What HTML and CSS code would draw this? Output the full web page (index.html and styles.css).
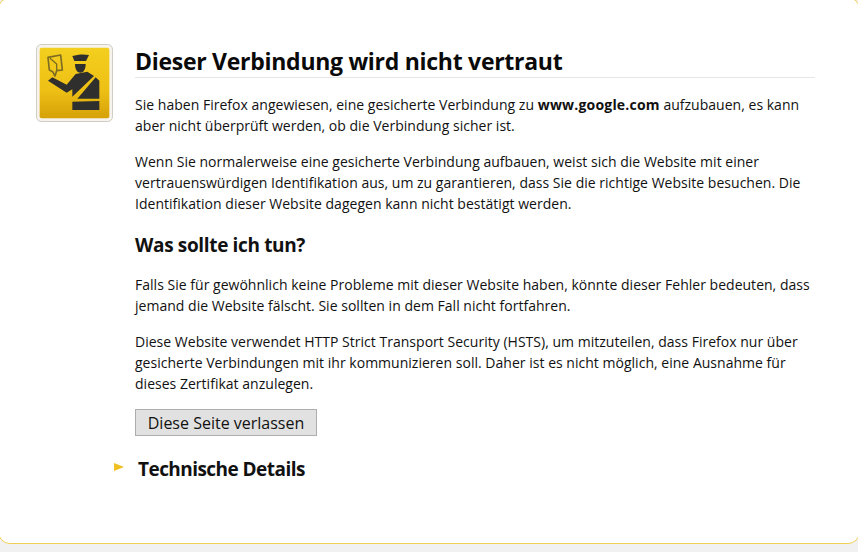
FILE: index.html
```html
<!DOCTYPE html>
<html lang="de">
<head>
<meta charset="utf-8">
<title>Dieser Verbindung wird nicht vertraut</title>
<link rel="stylesheet" href="styles.css">
</head>
<body>
<main class="card">
  <div class="icon-col">
    <svg class="icon" width="77" height="78" viewBox="0 0 231 234" aria-hidden="true">
      <defs>
        <linearGradient id="gold" x1="0" y1="0" x2="0" y2="1">
          <stop offset="0" stop-color="#f3cf1f"/>
          <stop offset="0.6" stop-color="#eec015"/>
          <stop offset="1" stop-color="#d5a108"/>
        </linearGradient>
      </defs>
      <rect x="1.500" y="1.500" width="228" height="231" rx="14" fill="#f5f3ec" stroke="#cfcdc6" stroke-width="3"/>
      <rect x="11" y="11" width="209" height="212" rx="6" fill="url(#gold)"/>
      <g transform="translate(24 18)">
        <path d="M12 22L50 15L55 60L38 62L33 78L26 65L16 60Z" fill="none" stroke="#7d6c22" stroke-width="5" stroke-linejoin="round"/>
        <path d="M18 25L38 42V62" fill="none" stroke="#7d6c22" stroke-width="4"/>
        <path d="M85 18C100 13 120 12 135 15L126 33H91Z" fill="#2f2f2d"/>
        <path d="M93 42H125C125 56 120 68 109 68C98 68 93 56 93 42Z" fill="#2f2f2d"/>
        <path d="M12 92L25 82L68 104L95 72L130 65L150 78L85 140V118L68 128Z" fill="#2f2f2d"/>
        <path d="M155 82L166 92V146H100Z" fill="#2f2f2d"/>
        <path d="M85 155L166 153V180H85Z" fill="#2f2f2d"/>
      </g>
    </svg>
  </div>
  <div class="content">
    <h1 class="title">Dieser Verbindung wird nicht vertraut</h1>
    <p class="para">Sie haben Firefox angewiesen, eine gesicherte Verbindung zu <strong class="host">www.google.com</strong> aufzubauen, es kann aber nicht überprüft werden, ob die Verbindung sicher ist.</p>
    <p class="para">Wenn Sie normalerweise eine gesicherte Verbindung aufbauen, weist sich die Website mit einer vertrauenswürdigen Identifikation aus, um zu garantieren, dass Sie die richtige Website besuchen. Die Identifikation dieser Website dagegen kann nicht bestätigt werden.</p>
    <h2 class="subtitle">Was sollte ich tun?</h2>
    <p class="para">Falls Sie für gewöhnlich keine Probleme mit dieser Website haben, könnte dieser Fehler bedeuten, dass jemand die Website fälscht. Sie sollten in dem Fall nicht fortfahren.</p>
    <p class="para">Diese Website verwendet HTTP Strict Transport Security (HSTS), um mitzuteilen, dass Firefox nur über gesicherte Verbindungen mit ihr kommunizieren soll. Daher ist es nicht möglich, eine Ausnahme für dieses Zertifikat anzulegen.</p>
    <button class="leave" type="button">Diese Seite verlassen</button>
    <div class="details">
      <span class="twisty"></span>
      <h2 class="details-title">Technische Details</h2>
    </div>
  </div>
</main>
</body>
</html>
```

FILE: styles.css
```css
html, body {
  margin: 0;
  height: 100%;
  overflow: hidden;
  background: #f1f1f1;
}

body {
  font-family: "Open Sans", "Noto Sans", sans-serif;
  color: #111;
}

.card {
  box-sizing: border-box;
  display: flex;
  height: 547px;
  margin: -3px -2px 0;
  padding: 46px 44px 0 37px;
  background: #fff;
  border: 1px solid #f0cf55;
  border-radius: 12px;
}

.icon-col {
  flex: none;
  width: 99px;
}

.icon {
  display: block;
}

.content {
  flex: 1;
  min-width: 0;
  padding-top: 4px;
}

.title {
  margin: 0 0 16px;
  padding-bottom: 2px;
  font-size: 23px;
  line-height: 27px;
  font-weight: 700;
  letter-spacing: -0.28px;
  color: #0a0a0a;
  border-bottom: 1px solid #e6e6e6;
}

.para {
  margin: 0 0 15px;
  font-size: 14px;
  line-height: 21px;
  letter-spacing: 0.02px;
}

.host {
  letter-spacing: 0.2px;
}

.subtitle {
  margin: 18px 0 16px;
  font-size: 19px;
  line-height: 26px;
  font-weight: 700;
  letter-spacing: -0.35px;
}

.leave {
  display: block;
  width: 182px;
  height: 27px;
  margin: 15px 0 0;
  padding: 0;
  font: inherit;
  font-size: 16px;
  letter-spacing: 0;
  color: #111;
  background: #e1e1e1;
  border: 1px solid #adadad;
}

.details {
  position: relative;
  margin-top: 20px;
  padding-left: 3px;
}

.details-title {
  margin: 0;
  font-size: 19px;
  line-height: 26px;
  font-weight: 700;
  letter-spacing: -0.55px;
}

.twisty {
  position: absolute;
  left: -21px;
  top: 7px;
  width: 0;
  height: 0;
  border-left: 10px solid #f0c020;
  border-top: 4.500px solid transparent;
  border-bottom: 4.500px solid transparent;
}
```
